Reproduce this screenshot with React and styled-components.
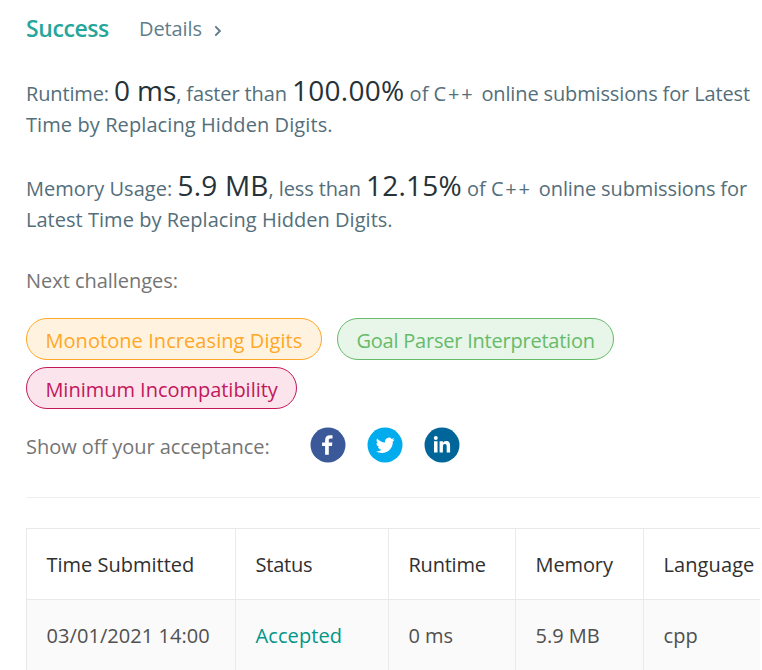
import React from "react";
import styled, { createGlobalStyle } from "styled-components";

const GlobalStyle = createGlobalStyle`
  *, *::before, *::after { box-sizing: border-box; }
  html, body { margin: 0; background: #fff; }
  body {
    height: 670px;
    overflow: hidden;
    font-family: "Open Sans", "Noto Sans", sans-serif;
    font-size: 20px;
    font-weight: 400;
    line-height: 31px;
    color: #546e7a;
  }
`;

const Page = styled.main`
  width: 760px;
  height: 670px;
  padding: 13px 0 0 26px;
  overflow: hidden;
`;

const Header = styled.header`
  display: flex;
  gap: 30px;
  height: 31px;
  white-space: nowrap;
`;

const Status = styled.h1`
  width: 83px;
  margin: 0;
  font-size: 23px;
  font-weight: 600;
  line-height: 30px;
  letter-spacing: -0.42px;
  color: #26a69a;
`;

const Details = styled.a`
  display: flex;
  align-items: center;
  gap: 12px;
  letter-spacing: -0.1px;
  color: #607d8b;

  svg { margin-top: 4px; }
`;

const Summary = styled.p`
  margin: ${(p) => p.$top}px 0 0;
  white-space: nowrap;
`;

const Line = styled.span`
  display: block;
  height: 31px;
`;

const Text = styled.span`
  letter-spacing: ${(p) => p.$track || 0}px;
`;

const Figure = styled.span`
  font-size: 28px;
  line-height: 0;
  letter-spacing: ${(p) => p.$track || 0}px;
  color: #263238;
`;

const Label = styled.div`
  height: 31px;
  color: #757575;
  letter-spacing: -0.04px;
  white-space: nowrap;
`;

const Challenges = styled.section`
  margin-top: 30px;
`;

const PillList = styled.div`
  display: flex;
  flex-wrap: wrap;
  gap: 7px 15px;
  margin-top: 22px;
`;

const tones = {
  medium: ["#ffa726", "#fff3e0"],
  easy: ["#66bb6a", "#e8f5e9"],
  hard: ["#c2185b", "#fce4ec"],
};

const Pill = styled.a`
  width: ${(p) => p.$width}px;
  height: 42px;
  padding: 6px 0 0 18.4px;
  border: 1px solid ${(p) => tones[p.$tone][0]};
  border-radius: 21px;
  background: ${(p) => tones[p.$tone][1]};
  color: ${(p) => tones[p.$tone][0]};
  letter-spacing: ${(p) => p.$track}px;
  white-space: nowrap;
`;

const Share = styled.section`
  display: flex;
  align-items: flex-start;
  height: 35px;
  margin-top: 18px;
`;

const ShareLabel = styled(Label)`
  width: 284px;
  margin-top: 4px;
`;

const Socials = styled.div`
  display: flex;
  gap: 21px;
`;

const Social = styled.a`
  display: block;
  width: 36px;
  height: 36px;

  svg { display: block; }
`;

const Divider = styled.hr`
  height: 1px;
  margin: 35px 0 30px;
  border: 0;
  background: #eee;
`;

const Table = styled.div`
  display: grid;
  grid-template-columns: 209px 153px 127px 128px 150px;
  width: 767px;
  border-top: 1px solid #e9e9e9;
`;

const Cell = styled.div`
  height: ${(p) => (p.$head ? 71 : 72)}px;
  padding: 20px 0 0 19.5px;
  border-left: 1px solid #e9e9e9;
  border-bottom: 1px solid #e9e9e9;
  background: ${(p) => (p.$head ? "#fff" : "#fafafa")};
  color: ${(p) => p.$color || (p.$head ? "#303030" : "#505050")};
  letter-spacing: ${(p) => p.$track || 0}px;
  white-space: nowrap;
`;

const headings = [
  ["Time Submitted", 0],
  ["Status", -0.22],
  ["Runtime", -0.22],
  ["Memory", -0.1],
  ["Language", 0.1],
];

const submission = [
  ["03/01/2021 14:00", 0.06],
  ["Accepted", 0.1, "#009688"],
  ["0 ms", -0.05],
  ["5.9 MB", 0],
  ["cpp", 0.09],
];

function Chevron() {
  return (
    <svg width="8" height="12" viewBox="0 0 8 12" fill="none" stroke="#607d8b" strokeWidth="1.9">
      <path d="M1.3 1.4 5.9 6 1.3 10.6" />
    </svg>
  );
}

function FacebookIcon() {
  return (
    <svg width="36" height="36" viewBox="0 0 36 36" fill="#fff">
      <circle cx="18" cy="18" r="17.5" fill="#3b5998" />
      <path d="M15.1 27.7v-8.6h-3v-3.7h3v-2.5c0-3.1 1.8-4.7 4.6-4.7 1.3 0 2.4.1 2.8.15v3.2h-1.9c-1.5 0-1.8.7-1.8 1.75v2.1h3.6l-.5 3.7h-3.1v8.6z" />
    </svg>
  );
}

function TwitterIcon() {
  return (
    <svg width="36" height="36" viewBox="0 0 36 36">
      <circle cx="18" cy="18" r="17.5" fill="#00acee" />
      <path
        fill="#fff"
        transform="translate(8.8 8.9) scale(.79)"
        d="M23.953 4.57a10 10 0 0 1-2.825.775 4.958 4.958 0 0 0 2.163-2.723c-.951.555-2.005.959-3.127 1.184a4.92 4.92 0 0 0-8.384 4.482C7.69 8.095 4.067 6.13 1.64 3.162a4.822 4.822 0 0 0-.666 2.475c0 1.71.87 3.213 2.188 4.096a4.904 4.904 0 0 1-2.228-.616v.06a4.923 4.923 0 0 0 3.946 4.827 4.996 4.996 0 0 1-2.212.085 4.936 4.936 0 0 0 4.604 3.417 9.867 9.867 0 0 1-6.102 2.105c-.39 0-.779-.023-1.17-.067a13.995 13.995 0 0 0 7.557 2.209c9.053 0 13.998-7.496 13.998-13.985 0-.21 0-.42-.015-.63A9.935 9.935 0 0 0 24 4.59z"
      />
    </svg>
  );
}

function LinkedinIcon() {
  return (
    <svg width="36" height="36" viewBox="0 0 36 36" fill="#fff">
      <circle cx="18" cy="18" r="17.5" fill="#006699" />
      <circle cx="11.8" cy="10.9" r="2" />
      <path d="M10 14.3h3.5V25.4H10zM15.6 14.3h3.3v1.5c.5-.9 1.6-1.8 3.2-1.8 3.4 0 4 2.2 4 5.2v6.2h-3.4v-5.5c0-1.3 0-2.9-1.8-2.9s-2 1.4-2 2.8v5.6h-3.3z" />
    </svg>
  );
}

export default function App() {
  return (
    <>
      <GlobalStyle />
      <Page>
        <Header>
          <Status>Success</Status>
          <Details>
            Details
            <Chevron />
          </Details>
        </Header>

        <Summary $top={34}>
          <Line>
            <Text $track={-0.15}>Runtime: </Text>
            <Figure $track={-0.07}>0 ms</Figure>
            <Text $track={-0.12}>, faster than </Text>
            <Figure $track={0.27}>100.00%</Figure>
            <Text> of </Text>
            <Text $track={1.8}>C++ </Text>
            <Text $track={-0.14}>online submissions for Latest</Text>
          </Line>
          <Line>
            <Text $track={0.09}>Time by Replacing Hidden Digits.</Text>
          </Line>
        </Summary>

        <Summary $top={33}>
          <Line>
            <Text $track={0.04}>Memory Usage: </Text>
            <Figure $track={0.2}>5.9 MB</Figure>
            <Text $track={-0.12}>, less than </Text>
            <Figure $track={0.2}>12.15%</Figure>
            <Text> of </Text>
            <Text $track={1.8}>C++ </Text>
            <Text $track={-0.12}>online submissions for</Text>
          </Line>
          <Line>
            <Text $track={0.03}>Latest Time by Replacing Hidden Digits.</Text>
          </Line>
        </Summary>

        <Challenges>
          <Label>Next challenges:</Label>
          <PillList>
            <Pill $tone="medium" $width={296} $track={0.07}>Monotone Increasing Digits</Pill>
            <Pill $tone="easy" $width={277} $track={-0.22}>Goal Parser Interpretation</Pill>
            <Pill $tone="hard" $width={271} $track={-0.02}>Minimum Incompatibility</Pill>
          </PillList>
        </Challenges>

        <Share>
          <ShareLabel>Show off your acceptance:</ShareLabel>
          <Socials>
            <Social><FacebookIcon /></Social>
            <Social><TwitterIcon /></Social>
            <Social><LinkedinIcon /></Social>
          </Socials>
        </Share>

        <Divider />

        <Table>
          {headings.map(([text, track]) => (
            <Cell key={text} $head $track={track}>{text}</Cell>
          ))}
          {submission.map(([text, track, color]) => (
            <Cell key={text} $track={track} $color={color}>{text}</Cell>
          ))}
        </Table>
      </Page>
    </>
  );
}
